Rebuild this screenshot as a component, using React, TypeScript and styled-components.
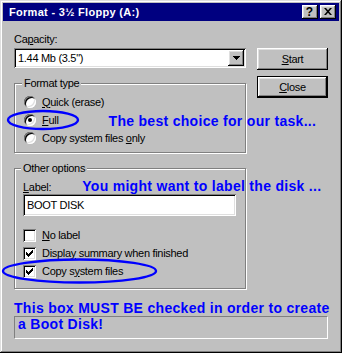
import React from "react";
import styled, { createGlobalStyle } from "styled-components";

const GlobalStyle = createGlobalStyle`
  html, body { margin: 0; padding: 0; background: #c0c0c0; }
  body { font-family: "Liberation Sans", Arial, sans-serif; font-size: 11px; }
  * { box-sizing: border-box; }
`;

const raised =
  "inset -1px -1px 0 #000, inset 1px 1px 0 #fff, inset -2px -2px 0 #808080, inset 2px 2px 0 #dfdfdf";
const sunken =
  "inset 1px 1px 0 #808080, inset -1px -1px 0 #fff, inset 2px 2px 0 #000, inset -2px -2px 0 #dfdfdf";

const Window = styled.div`
  position: relative;
  width: 342px;
  height: 353px;
  padding: 3px;
  background: #c0c0c0;
  box-shadow: inset -1px -1px 0 #000, inset 1px 1px 0 #dfdfdf, inset -2px -2px 0 #808080,
    inset 2px 2px 0 #fff;
  display: flex;
  flex-direction: column;
  color: #000;
  letter-spacing: -0.3px;
`;

const TitleBar = styled.div`
  height: 18px;
  flex: none;
  display: flex;
  align-items: center;
  padding: 0 3px;
  background: #000080;
  color: #fff;
  font-weight: bold;
  font-size: 11px;
  letter-spacing: 0.3px;
`;

const TitleText = styled.div`
  flex: 1;
  padding-left: 3px;
  white-space: nowrap;
`;

const TitleButtons = styled.div`
  display: flex;
  gap: 2px;
`;

const TitleButton = styled.div`
  width: 16px;
  height: 14px;
  background: #c0c0c0;
  box-shadow: ${raised};
  display: flex;
  align-items: center;
  justify-content: center;
  color: #000;
  font-weight: bold;
  font-size: 12px;
  line-height: 1;
  letter-spacing: 0;
  padding: 0 1px 1px 0;
`;

const Body = styled.div`
  flex: 1;
  display: flex;
  flex-direction: column;
  padding: 12px 11px 0 11px;
`;

const Main = styled.div`
  display: flex;
  gap: 11px;
`;

const LeftCol = styled.div`
  width: 232px;
  display: flex;
  flex-direction: column;
`;

const RightCol = styled.div`
  width: 71px;
  display: flex;
  flex-direction: column;
  gap: 6px;
  padding-top: 15px;
`;

const FieldLabel = styled.div`
  line-height: 13px;
  height: 13px;
  margin-bottom: 2px;
  white-space: nowrap;
`;

const Key = styled.span`
  text-decoration: underline;
`;

const Combo = styled.div`
  height: 20px;
  background: #fff;
  box-shadow: ${sunken};
  display: flex;
  align-items: center;
  padding: 2px 2px 2px 4px;
`;

const ComboText = styled.div`
  flex: 1;
  white-space: nowrap;
`;

const DropButton = styled.div`
  width: 16px;
  height: 16px;
  background: #c0c0c0;
  box-shadow: ${raised};
  display: flex;
  align-items: center;
  justify-content: center;
`;

const PushButton = styled.div<{ $default?: boolean }>`
  width: 71px;
  height: 22px;
  background: #c0c0c0;
  border: ${(p) => (p.$default ? "1px solid #000" : "none")};
  box-shadow: ${raised};
  display: flex;
  align-items: center;
  justify-content: center;
  line-height: 13px;
`;

const GroupBox = styled.div<{ $padLeft: number; $padBottom: number }>`
  margin-top: 15px;
  border: 1px solid #808080;
  box-shadow: inset 1px 1px 0 #fff, 1px 1px 0 #fff;
  padding: 0 0 ${(p) => p.$padBottom}px ${(p) => p.$padLeft}px;
  display: flex;
  flex-direction: column;
`;

const GroupTitle = styled.div`
  align-self: flex-start;
  margin: -7px 0 0 -2px;
  padding: 0 2px;
  background: #c0c0c0;
  line-height: 13px;
  height: 13px;
  white-space: nowrap;
`;

const OptionList = styled.div<{ $top: number }>`
  margin-top: ${(p) => p.$top}px;
  display: flex;
  flex-direction: column;
`;

const OptionRow = styled.div`
  height: 18px;
  display: flex;
  align-items: center;
  gap: 6px;
  white-space: nowrap;
  line-height: 13px;
`;

const RadioCircle = styled.span<{ $checked?: boolean }>`
  width: 12px;
  height: 12px;
  flex: none;
  border-radius: 50%;
  background: #fff;
  box-shadow: inset 1px 1px 0 #808080, inset -1px -1px 0 #fff, inset 2px 2px 0 #000,
    inset -2px -2px 0 #dfdfdf;
  display: flex;
  align-items: center;
  justify-content: center;
  &::after {
    content: "";
    width: 4px;
    height: 4px;
    border-radius: 50%;
    background: ${(p) => (p.$checked ? "#000" : "transparent")};
  }
`;

const CheckBox = styled.span`
  width: 13px;
  height: 13px;
  flex: none;
  background: #fff;
  box-shadow: ${sunken};
  display: flex;
`;

const Annotation = styled.span<{ $left?: number; $top?: number }>`
  color: #0000ff;
  font-weight: bold;
  font-size: 14px;
  letter-spacing: 0.3px;
  line-height: 13px;
  white-space: nowrap;
  margin-left: ${(p) => p.$left ?? 0}px;
  margin-top: ${(p) => p.$top ?? 0}px;
`;

const LabelRow = styled.div`
  margin-top: 5px;
  display: flex;
  align-items: baseline;
  line-height: 13px;
  white-space: nowrap;
`;

const TextField = styled.div`
  width: 213px;
  height: 22px;
  background: #fff;
  box-shadow: ${sunken};
  display: flex;
  align-items: center;
  padding: 0 4px;
  white-space: nowrap;
`;

const NoteLine = styled.div`
  margin-top: 12px;
  color: #0000ff;
  font-weight: bold;
  font-size: 14px;
  letter-spacing: 0.3px;
  line-height: 14px;
  white-space: nowrap;
`;

const NoteBox = styled.div`
  margin-top: 1px;
  height: 23px;
  border-top: 1px solid #808080;
  border-left: 1px solid #808080;
  border-right: 1px solid #fff;
  border-bottom: 1px solid #fff;
  padding: 0 0 0 3px;
  color: #0000ff;
  font-weight: bold;
  font-size: 14px;
  letter-spacing: 0.3px;
  line-height: 14px;
  white-space: nowrap;
`;

const Overlay = styled.svg`
  position: absolute;
  left: 0;
  top: 0;
  pointer-events: none;
`;

const CheckMark = () => (
  <svg width="13" height="13" viewBox="0 0 13 13" shapeRendering="crispEdges">
    <path d="M3 5H4V6H5V7H6V6H7V5H8V4H9V3H10V6H9V7H8V8H7V9H6V10H5V9H4V8H3Z" fill="#000" />
  </svg>
);

const Radio = ({ checked, children }: { checked?: boolean; children: React.ReactNode }) => (
  <OptionRow>
    <RadioCircle $checked={checked} />
    {children}
  </OptionRow>
);

const Check = ({ checked, children }: { checked?: boolean; children: React.ReactNode }) => (
  <OptionRow>
    <CheckBox>{checked && <CheckMark />}</CheckBox>
    {children}
  </OptionRow>
);

export default function App() {
  return (
    <>
      <GlobalStyle />
      <Window>
        <TitleBar>
          <TitleText>Format - 3½ Floppy (A:)</TitleText>
          <TitleButtons>
            <TitleButton>?</TitleButton>
            <TitleButton>
              <svg width="8" height="7" viewBox="0 0 8 7">
                <path d="M0 0h2l2 2.2L6 0h2L5 3.5 8 7H6L4 4.8 2 7H0l3-3.5z" fill="#000" />
              </svg>
            </TitleButton>
          </TitleButtons>
        </TitleBar>
        <Body>
          <Main>
            <LeftCol>
              <FieldLabel>
                Ca<Key>p</Key>acity:
              </FieldLabel>
              <Combo>
                <ComboText>1.44 Mb (3.5")</ComboText>
                <DropButton>
                  <svg width="7" height="4" viewBox="0 0 7 4" shapeRendering="crispEdges">
                    <path d="M0 0H7V1H6V2H5V3H4V4H3V3H2V2H1V1H0Z" fill="#000" />
                  </svg>
                </DropButton>
              </Combo>
              <GroupBox $padLeft={9} $padBottom={5}>
                <GroupTitle>Format type</GroupTitle>
                <OptionList $top={3}>
                  <Radio>
                    <span>
                      <Key>Q</Key>uick (erase)
                    </span>
                  </Radio>
                  <Radio checked>
                    <span>
                      <Key>F</Key>ull
                    </span>
                    <Annotation $left={44} $top={2}>
                      The best choice for our task...
                    </Annotation>
                  </Radio>
                  <Radio>
                    <span>
                      Copy system files <Key>o</Key>nly
                    </span>
                  </Radio>
                </OptionList>
              </GroupBox>
              <GroupBox $padLeft={8} $padBottom={8}>
                <GroupTitle>Other options</GroupTitle>
                <LabelRow>
                  <span>
                    <Key>L</Key>abel:
                  </span>
                  <Annotation $left={31}>You might want to label the disk ...</Annotation>
                </LabelRow>
                <TextField>BOOT DISK</TextField>
                <OptionList $top={10}>
                  <Check>
                    <span>
                      <Key>N</Key>o label
                    </span>
                  </Check>
                  <Check checked>
                    <span>
                      Displa<Key>y</Key> summary when finished
                    </span>
                  </Check>
                  <Check checked>
                    <span>
                      Copy s<Key>y</Key>stem files
                    </span>
                  </Check>
                </OptionList>
              </GroupBox>
            </LeftCol>
            <RightCol>
              <PushButton>
                <span>
                  <Key>S</Key>tart
                </span>
              </PushButton>
              <PushButton $default>
                <span>
                  <Key>C</Key>lose
                </span>
              </PushButton>
            </RightCol>
          </Main>
          <NoteLine>This box MUST BE checked in order to create</NoteLine>
          <NoteBox>a Boot Disk!</NoteBox>
        </Body>
        <Overlay width="342" height="353" viewBox="0 0 342 353">
          <ellipse cx="43" cy="120" rx="35" ry="9" fill="none" stroke="#0000ff" strokeWidth="2.4" />
          <ellipse cx="79.5" cy="271" rx="76.5" ry="11.5" fill="none" stroke="#0000ff" strokeWidth="2.4" />
        </Overlay>
      </Window>
    </>
  );
}
